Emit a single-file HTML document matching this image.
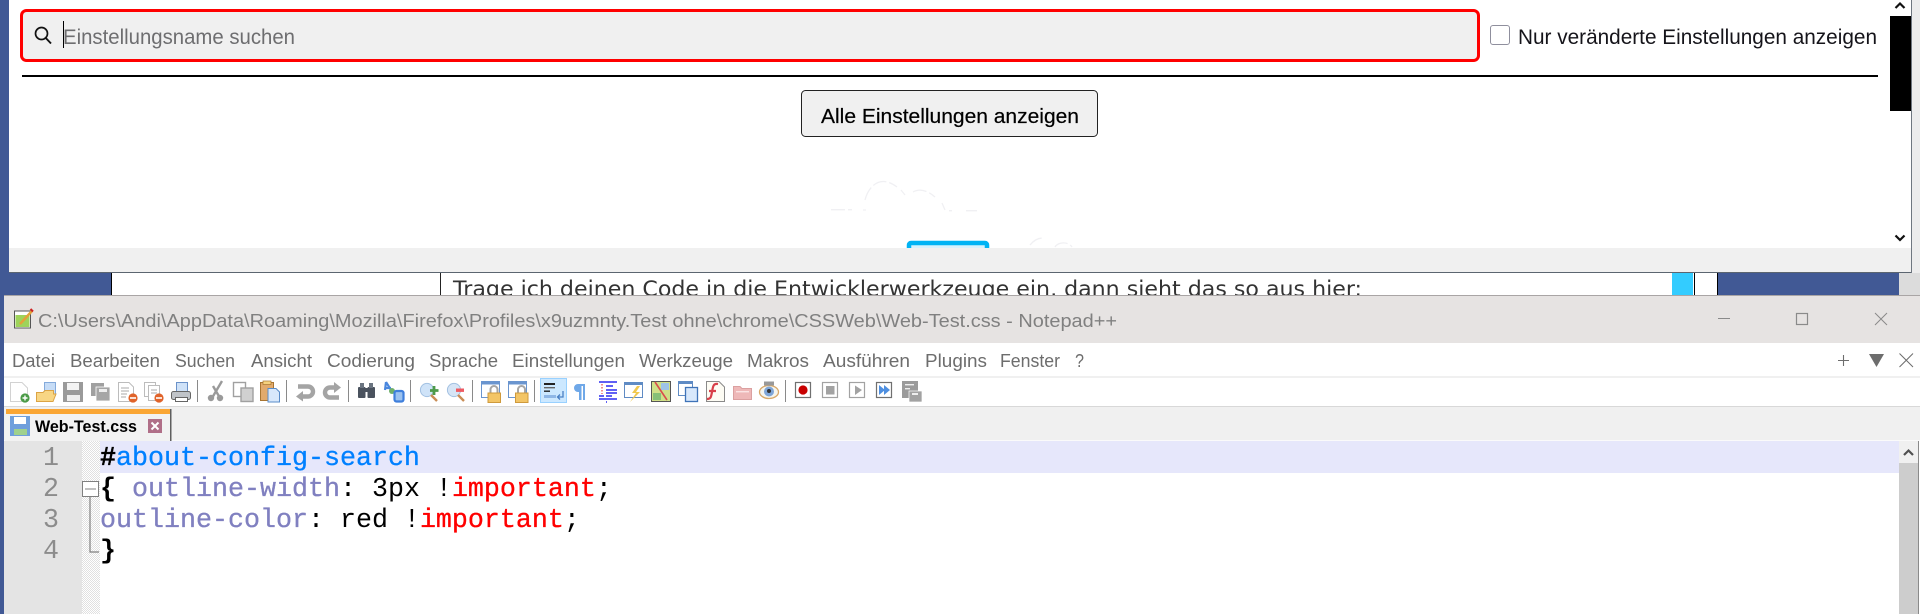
<!DOCTYPE html>
<html lang="de">
<head>
<meta charset="utf-8">
<title>Web-Test.css - Notepad++</title>
<style>
html,body{margin:0;padding:0;width:1920px;height:614px;overflow:hidden;background:#ececec}
svg{display:block;position:absolute;left:0;top:0}
.ui{font-family:"Liberation Sans",sans-serif}
.menu{font-family:"Liberation Sans",sans-serif;font-size:18px;fill:#6d6d6d}
.code{font-family:"Liberation Mono",monospace;font-size:26.67px;white-space:pre}
</style>
</head>
<body>
<svg width="1920" height="614" viewBox="0 0 1920 614" xmlns="http://www.w3.org/2000/svg">
<!-- desktop / page behind -->
<rect x="0" y="0" width="1920" height="296" fill="#ececec"/>
<rect x="0" y="0" width="1899" height="296" fill="#415995"/>
<rect x="1899" y="273" width="21" height="23" fill="#dcdcdc"/>
<rect x="111" y="272" width="1607" height="24" fill="#fff"/>
<rect x="111" y="272" width="1" height="24" fill="#000"/>
<rect x="440" y="272" width="1" height="24" fill="#222"/>
<rect x="1672" y="272" width="21" height="24" fill="#33ccff"/>
<rect x="1694" y="272" width="1" height="24" fill="#000"/>
<rect x="1717" y="272" width="1" height="24" fill="#000"/>
<text x="453" y="296" font-family="'DejaVu Sans',sans-serif" font-size="21" fill="#333" textLength="909" lengthAdjust="spacingAndGlyphs">Trage ich deinen Code in die Entwicklerwerkzeuge ein, dann sieht das so aus hier:</text>

<!-- modal dialog -->
<rect x="9" y="0" width="1902" height="272" fill="#fff"/>
<g fill="none" stroke="#f0f0f3" stroke-width="1.3" stroke-dasharray="14 3">
<path d="M831 209.7H852M863 210H866M865 200C868 188 876 181 884 181.5C889 182 893 184 897 187M901 190L905 195M913 192C918 189 926 189 935 197M942 203L945 210M949 210.7H952M966 210.7H977"/>
<path d="M1030 245C1034 240 1038 238 1043 238M1055 247C1058 242 1068 241 1072 247"/>
</g>
<rect x="909" y="243" width="78" height="12" rx="2" fill="#d6f1fc" stroke="#00b3f4" stroke-width="4.5"/>
<rect x="9" y="248" width="1902" height="24" fill="#f0f0f0"/>
<rect x="9" y="272" width="1903" height="1" fill="#5b6570"/>
<rect x="1911" y="0" width="1" height="273" fill="#6f7780"/>

<!-- search -->
<rect x="21.5" y="10.5" width="1457" height="50" rx="5" fill="#f0f0f0" stroke="#ff0000" stroke-width="3"/>
<circle cx="41.5" cy="33.5" r="6" fill="none" stroke="#111" stroke-width="1.7"/>
<path d="M45.8 38L51 43.5" stroke="#111" stroke-width="1.9"/>
<rect x="63" y="21" width="1" height="27" fill="#000"/>
<text x="63" y="44" class="ui" font-size="21" fill="#6e6e70" textLength="232" lengthAdjust="spacingAndGlyphs">Einstellungsname suchen</text>
<rect x="1490.5" y="25.5" width="19" height="19" rx="2.5" fill="#fff" stroke="#8f8f9d"/>
<text x="1518" y="44" class="ui" font-size="21" fill="#15141a" textLength="359" lengthAdjust="spacingAndGlyphs">Nur veränderte Einstellungen anzeigen</text>
<rect x="22" y="75" width="1856" height="2" fill="#000"/>
<rect x="801.5" y="90.5" width="296" height="46" rx="4" fill="#f0f0f0" stroke="#222"/>
<text x="821" y="123" class="ui" font-size="20.5" fill="#000" stroke="#000" stroke-width=".2" textLength="258" lengthAdjust="spacingAndGlyphs">Alle Einstellungen anzeigen</text>
<!-- modal scrollbar -->
<path d="M1895.5 8L1900 3.5L1904.5 8" fill="none" stroke="#111" stroke-width="2.2"/>
<rect x="1890" y="16" width="21" height="95" fill="#000"/>
<path d="M1895.5 235.5L1900 240L1904.5 235.5" fill="none" stroke="#111" stroke-width="2.2"/>

<!-- Notepad++ window -->
<rect x="0" y="295" width="4" height="319" fill="#415995"/>
<rect x="4" y="295" width="1916" height="1" fill="#a9a5a5"/>
<rect x="4" y="296" width="1916" height="47" fill="#e6e3e2"/>
<rect x="4" y="343" width="1916" height="33" fill="#fff"/>
<rect x="4" y="376" width="1916" height="2" fill="#f0f0f0"/>
<rect x="4" y="378" width="1916" height="28" fill="#fff"/>
<rect x="4" y="406" width="1916" height="1" fill="#d8d8d8"/>
<rect x="4" y="407" width="1916" height="33" fill="#f0f0f0"/>
<rect x="4" y="440" width="1916" height="1" fill="#fafafa"/>
<rect x="4" y="441" width="1916" height="173" fill="#fff"/>

<!-- title bar -->
<rect x="14.5" y="311" width="16" height="17" fill="#fff" stroke="#555"/>
<rect x="15.5" y="315" width="14" height="12" fill="#9ed35a"/>
<path d="M20 324L32 311" stroke="#e3a23a" stroke-width="2.5"/>
<path d="M30.5 309L33 311.5" stroke="#c22" stroke-width="2"/>
<text x="38" y="327" class="ui" font-size="18" fill="#808080" textLength="1079" lengthAdjust="spacingAndGlyphs">C:\Users\Andi\AppData\Roaming\Mozilla\Firefox\Profiles\x9uzmnty.Test ohne\chrome\CSSWeb\Web-Test.css - Notepad++</text>
<rect x="1718" y="318" width="12" height="1" fill="#8a8a8a"/>
<rect x="1796.5" y="313.5" width="11" height="11" fill="none" stroke="#8a8a8a" stroke-width="1.2"/>
<path d="M1875 313L1887 325M1887 313L1875 325" stroke="#8a8a8a" stroke-width="1"/>

<!-- menu -->
<text class="menu" x="12" y="367" textLength="43" lengthAdjust="spacingAndGlyphs">Datei</text>
<text class="menu" x="70" y="367" textLength="90" lengthAdjust="spacingAndGlyphs">Bearbeiten</text>
<text class="menu" x="175" y="367" textLength="60" lengthAdjust="spacingAndGlyphs">Suchen</text>
<text class="menu" x="251" y="367" textLength="61" lengthAdjust="spacingAndGlyphs">Ansicht</text>
<text class="menu" x="327" y="367" textLength="88" lengthAdjust="spacingAndGlyphs">Codierung</text>
<text class="menu" x="429" y="367" textLength="69" lengthAdjust="spacingAndGlyphs">Sprache</text>
<text class="menu" x="512" y="367" textLength="113" lengthAdjust="spacingAndGlyphs">Einstellungen</text>
<text class="menu" x="639" y="367" textLength="94" lengthAdjust="spacingAndGlyphs">Werkzeuge</text>
<text class="menu" x="747" y="367" textLength="62" lengthAdjust="spacingAndGlyphs">Makros</text>
<text class="menu" x="823" y="367" textLength="87" lengthAdjust="spacingAndGlyphs">Ausführen</text>
<text class="menu" x="925" y="367" textLength="62" lengthAdjust="spacingAndGlyphs">Plugins</text>
<text class="menu" x="1000" y="367" textLength="60" lengthAdjust="spacingAndGlyphs">Fenster</text>
<text class="menu" x="1075" y="367" textLength="9" lengthAdjust="spacingAndGlyphs">?</text>
<path d="M1843.5 355V366M1838 360.5H1849" stroke="#6d6d6d" stroke-width="1.1"/>
<polygon points="1869,354 1884,354 1876.5,367" fill="#6d6d6d"/>
<path d="M1899.5 353.5L1913 367M1913 353.5L1899.5 367" stroke="#6d6d6d" stroke-width="1"/>

<!-- toolbar separators -->
<g fill="#8a8a8a">
<rect x="197" y="380" width="1" height="22"/><rect x="286" y="380" width="1" height="22"/>
<rect x="348" y="380" width="1" height="22"/><rect x="410" y="380" width="1" height="22"/>
<rect x="472" y="380" width="1" height="22"/><rect x="534" y="380" width="1" height="22"/>
<rect x="785" y="380" width="1" height="22"/>
</g>
<!-- new -->
<path d="M10.5 382.5H22L27.5 388V401.5H10.5Z" fill="#fff" stroke="#d2d2d2"/>
<circle cx="25" cy="398" r="4.6" fill="#4b9b47"/><path d="M25 395.5V400.5M22.5 398H27.5" stroke="#fff" stroke-width="1.4"/>
<!-- open -->
<rect x="44.5" y="382.5" width="11" height="13" fill="#c6dcf6" stroke="#84aadb"/>
<path d="M36.5 401.5V392.5H43L45 390.5H53.5V394H56L53 401.5Z" fill="#f8d684" stroke="#dca444"/>
<!-- save -->
<rect x="63" y="382" width="20" height="20" fill="#9a9a9a"/><rect x="67" y="383" width="12" height="7" fill="#f3f3f3"/><rect x="67" y="395" width="13" height="6" fill="#eee"/>
<!-- save all -->
<rect x="91" y="383" width="13" height="13" fill="#a0a0a0"/><rect x="96" y="387" width="14" height="14" fill="#a6a6a6" stroke="#fff" stroke-width=".8"/><rect x="99" y="389" width="8" height="3" fill="#eee"/>
<!-- close -->
<path d="M118.5 382.5H129L133.5 387V401.5H118.5Z" fill="#fff" stroke="#bcbcbc"/>
<path d="M121 388H129M121 391H129M121 394H127M121 397H126" stroke="#aaa"/>
<circle cx="133" cy="398" r="4.6" fill="#e0632a"/><rect x="130" y="397.2" width="6" height="1.6" fill="#fff"/>
<!-- close all -->
<rect x="144.5" y="382.5" width="11" height="14" fill="#fff" stroke="#bcbcbc"/><rect x="148.5" y="385.5" width="11" height="15" fill="#fff" stroke="#bcbcbc"/>
<path d="M151 390H157M151 393H157" stroke="#aaa"/>
<circle cx="159" cy="398" r="4.6" fill="#e0632a"/><rect x="156" y="397.2" width="6" height="1.6" fill="#fff"/>
<!-- print -->
<rect x="176.5" y="382.5" width="11" height="10" fill="#cfe2f8" stroke="#6b92c9"/>
<rect x="171.5" y="391.5" width="19" height="8" rx="2" fill="#c0c4c9" stroke="#666"/>
<rect x="175.5" y="397.5" width="12" height="4" fill="#fff" stroke="#666"/>
<!-- cut -->
<path d="M222 381L212 398M213 386L220 398" stroke="#9a9a9a" stroke-width="2.4" fill="none"/>
<circle cx="211" cy="398" r="3.2" fill="#9a9a9a"/><circle cx="220" cy="398" r="3.2" fill="#9a9a9a"/>
<!-- copy -->
<rect x="233.5" y="382.5" width="12" height="14" fill="#fff" stroke="#a0a0a0" stroke-width="1.4"/>
<rect x="241" y="388" width="12" height="13.5" fill="#d0d0d0" stroke="#a0a0a0" stroke-width="1.4"/>
<!-- paste -->
<rect x="260.5" y="382.5" width="13" height="18" fill="#e2aa6c" stroke="#a87532"/><rect x="263" y="381" width="8" height="3.5" fill="#f6d27f" stroke="#a87532" stroke-width=".7"/>
<path d="M268 388.5H276L279.5 392V402H268Z" fill="#d8e8fb" stroke="#5a8cc8"/>
<!-- undo / redo -->
<path d="M298 386.5H308A4.8 4.8 0 0 1 308 396.5H301" fill="none" stroke="#a4a4a4" stroke-width="4.4"/><polygon points="296,396.5 303,391 303,401.5" fill="#a4a4a4"/>
<path d="M338 387.5H330A4.8 4.8 0 0 0 330 397.5H339" fill="none" stroke="#a4a4a4" stroke-width="4.4"/><polygon points="341,387.5 334,382 334,393" fill="#a4a4a4"/>
<!-- find -->
<rect x="358" y="387" width="7.5" height="11" rx="1" fill="#4a525e"/><rect x="367.5" y="387" width="7.5" height="11" rx="1" fill="#4a525e"/>
<rect x="360" y="383" width="4" height="5" fill="#6a7480"/><rect x="369" y="383" width="4" height="5" fill="#6a7480"/><rect x="365" y="388" width="3" height="4" fill="#4a525e"/>
<!-- replace -->
<path d="M386 382L385 390M386 382L391 390M385 388H391" stroke="#4a87de" stroke-width="2.2" fill="none"/>
<circle cx="392" cy="391" r="3" fill="#6fb06a"/>
<rect x="394.5" y="391" width="9" height="10.5" rx="2" fill="#9cc2ee" stroke="#3f7fdc" stroke-width="2.2"/>
<!-- zoom in/out -->
<circle cx="427" cy="390" r="6.6" fill="#cfe3f8" stroke="#a3c1e2"/><path d="M431 395L437 401" stroke="#c98d55" stroke-width="2.4"/>
<path d="M434 386V395M430 390.5H438.5" stroke="#4d9a4b" stroke-width="2.8"/>
<circle cx="454" cy="390" r="6.6" fill="#d6e5f6" stroke="#a3c1e2"/><path d="M458 395L464 401" stroke="#c98d55" stroke-width="2.4"/>
<rect x="456" y="388.5" width="8" height="3.4" fill="#ee5a62"/>
<!-- sync V / H -->
<rect x="481.5" y="381.5" width="18" height="16" fill="#fff" stroke="#6a95cf"/><rect x="481" y="381" width="19" height="3.5" fill="#6a95cf"/>
<path d="M490.5 393V389.5A3.5 3.5 0 0 1 497.5 389.5V393" fill="none" stroke="#a6a6a6" stroke-width="2"/><rect x="488" y="393" width="12.5" height="9.5" fill="#f3c566" stroke="#cf9a3c"/>
<rect x="508.5" y="381.5" width="18" height="16" fill="#fff" stroke="#6a95cf"/><rect x="508" y="381" width="19" height="3.5" fill="#6a95cf"/>
<path d="M518 393V389.5A3.5 3.5 0 0 1 525 389.5V393" fill="none" stroke="#a6a6a6" stroke-width="2"/><rect x="515.5" y="393" width="12.5" height="9.5" fill="#f3c566" stroke="#cf9a3c"/>
<!-- word wrap (active) -->
<rect x="540.5" y="378.5" width="26" height="24" fill="#cce8ff" stroke="#99d1ff"/>
<rect x="544" y="383" width="11" height="2" fill="#222"/><rect x="544" y="387" width="11" height="1.4" fill="#666"/><rect x="544" y="390.5" width="6" height="1.4" fill="#222"/>
<rect x="544" y="395" width="12" height="3" fill="#8fb7e6"/>
<path d="M563 391V397H558M560 394.5L557.5 397L560 399.5" fill="none" stroke="#4a80c4" stroke-width="1.3"/>
<!-- pilcrow -->
<path d="M585 384H578A4 4 0 0 0 578 392H579V400H581.5V386H583V400H585Z" fill="#6fa8e8"/>
<!-- indent guide -->
<path d="M599 382H617M606 386H613M606 390H617M606 393H617M606 396H612M599 396H604M599 399H617M606 402H607" stroke="#0000ee" stroke-width="1.3"/>
<path d="M602 384V394" stroke="#e02020" stroke-dasharray="1.5 1.5"/>
<!-- language / lightning -->
<rect x="624.5" y="382.5" width="18" height="15" fill="#fff" stroke="#5f8bc4"/><rect x="624" y="382" width="19" height="3" fill="#5f8bc4"/>
<polygon points="637,386 632,393 636,393 630,402 640,392 636,392 640,386" fill="#f0c84e"/>
<!-- doc map -->
<rect x="651.5" y="381.5" width="19" height="20" fill="#cfe088" stroke="#555"/>
<rect x="661" y="383" width="8" height="7" fill="#9ec3e8"/><rect x="653" y="393" width="8" height="7" fill="#86c078"/>
<path d="M655 382L667 400" stroke="#d94c4c" stroke-width="1.6"/>
<!-- doc list -->
<rect x="678.5" y="381.5" width="14" height="14" fill="#fff" stroke="#5f8bc4"/><rect x="678" y="381" width="15" height="3" fill="#5f8bc4"/>
<rect x="685.5" y="387.5" width="12" height="14" fill="#d8e8fb" stroke="#3f73b8" stroke-width="1.3"/>
<!-- function list -->
<path d="M706.5 381.5H719L724.5 387V401.5H706.5Z" fill="#fdfcf4" stroke="#8a8a8a"/>
<path d="M718 384C713 383 713 387 712 392C711 397 711 399 707 399M709 391H716" fill="none" stroke="#d8404a" stroke-width="2.2"/>
<!-- folder -->
<path d="M733.5 399.5V386.5H740L742 388.5H751.5V399.5Z" fill="#eeb8b8" stroke="#dba0a0"/>
<rect x="736" y="391" width="13" height="1.4" fill="#fbe4e4"/>
<!-- eye -->
<ellipse cx="769" cy="392" rx="9.5" ry="6.5" fill="#f5f5ee" stroke="#d8a868" stroke-width="1.3"/>
<rect x="764" y="381.5" width="10" height="4" fill="#999"/>
<circle cx="769" cy="391.5" r="5" fill="#7fa6d8"/><circle cx="769" cy="391" r="2" fill="#333"/>
<!-- macro -->
<rect x="795.5" y="382.5" width="15" height="15" fill="#fff" stroke="#707070" stroke-width="1.2"/><circle cx="803" cy="390" r="4.6" fill="#c80000"/>
<rect x="822.5" y="382.5" width="15" height="15" fill="#fff" stroke="#a2a2a2" stroke-width="1.2"/><rect x="826" y="386" width="8.5" height="8.5" fill="#a2a2a2"/>
<rect x="849.5" y="382.5" width="15" height="15" fill="#fff" stroke="#a2a2a2" stroke-width="1.2"/><polygon points="855,385.5 855,395 862,390" fill="#a2a2a2"/>
<rect x="876.5" y="382.5" width="15" height="15" fill="#fff" stroke="#707070" stroke-width="1.2"/><polygon points="879,385 879,395 885,390" fill="#4e8fe0"/><polygon points="884,385 884,395 890,390" fill="#4e8fe0"/>
<rect x="902" y="381" width="16" height="17" fill="#9b9b9b"/><rect x="905" y="384" width="9" height="1.4" fill="#eee"/><rect x="905" y="388" width="5" height="1.4" fill="#eee"/>
<rect x="909" y="391" width="13" height="11" fill="#a2a2a2" stroke="#fff" stroke-width=".7"/><rect x="912" y="393" width="6" height="2" fill="#eee"/>

<!-- tab -->
<rect x="5" y="409" width="165" height="32" fill="#f2f2f2"/>
<rect x="6" y="409" width="164" height="5" fill="#faa634"/>
<rect x="170" y="409" width="1.5" height="32" fill="#5e5e5e"/>
<rect x="10" y="416" width="20" height="20" fill="#6f9fdc"/><rect x="14" y="417" width="12" height="7" fill="#fff"/><rect x="14" y="429" width="13" height="6" fill="#9fd18d"/>
<text x="35" y="432" class="ui" font-size="17" font-weight="700" fill="#000" textLength="102" lengthAdjust="spacingAndGlyphs">Web-Test.css</text>
<rect x="148" y="419" width="14" height="14" fill="#b06f88"/><path d="M151.5 422.5L158.5 429.5M158.5 422.5L151.5 429.5" stroke="#fff" stroke-width="2"/>

<!-- editor margins -->
<defs><pattern id="dither" width="2" height="2" patternUnits="userSpaceOnUse"><rect width="2" height="2" fill="#fff"/><rect width="1" height="1" fill="#e0e0e0"/><rect x="1" y="1" width="1" height="1" fill="#e0e0e0"/></pattern></defs>
<rect x="4" y="441" width="78" height="173" fill="#e4e4e4"/>
<rect x="82" y="441" width="18" height="173" fill="url(#dither)"/>
<rect x="100" y="441" width="1799" height="32" fill="#e6e7fb"/>
<g class="code" fill="#8c8c8c" font-family="'Liberation Mono',monospace" font-size="26.67">
<text x="43" y="465">1</text><text x="43" y="496">2</text><text x="43" y="527">3</text><text x="43" y="558">4</text>
</g>
<rect x="82.5" y="481.5" width="16" height="15" fill="#fff" stroke="#808080"/>
<path d="M85 489H96" stroke="#808080"/>
<path d="M90 497V552H99" fill="none" stroke="#808080" stroke-width="1.2"/>

<!-- code -->
<text class="code" x="100" y="465" stroke-width=".3"><tspan fill="#000" stroke="#000" font-weight="700">#</tspan><tspan fill="#0080ff" stroke="#0080ff">about-config-search</tspan></text>
<text class="code" x="100" y="496" stroke-width=".3"><tspan fill="#000" font-weight="700">{ </tspan><tspan fill="#8080c0" stroke="#8080c0">outline-width</tspan><tspan fill="#000">: 3px !</tspan><tspan fill="#ff0000" stroke="#ff0000">important</tspan><tspan fill="#000">;</tspan></text>
<text class="code" x="100" y="527" stroke-width=".3"><tspan fill="#8080c0" stroke="#8080c0">outline-color</tspan><tspan fill="#000">: red !</tspan><tspan fill="#ff0000" stroke="#ff0000">important</tspan><tspan fill="#000">;</tspan></text>
<text class="code" x="100" y="558" fill="#000" font-weight="700">}</text>

<!-- editor scrollbar -->
<rect x="1899" y="441" width="19" height="22" fill="#f0f0f0"/>
<rect x="1899" y="463" width="19" height="151" fill="#cdcdcd"/>
<rect x="1918" y="441" width="1" height="173" fill="#8a8a8a"/>
<path d="M1904 455L1908.5 450.5L1913 455" fill="none" stroke="#505050" stroke-width="2.2"/>
</svg>
</body>
</html>
